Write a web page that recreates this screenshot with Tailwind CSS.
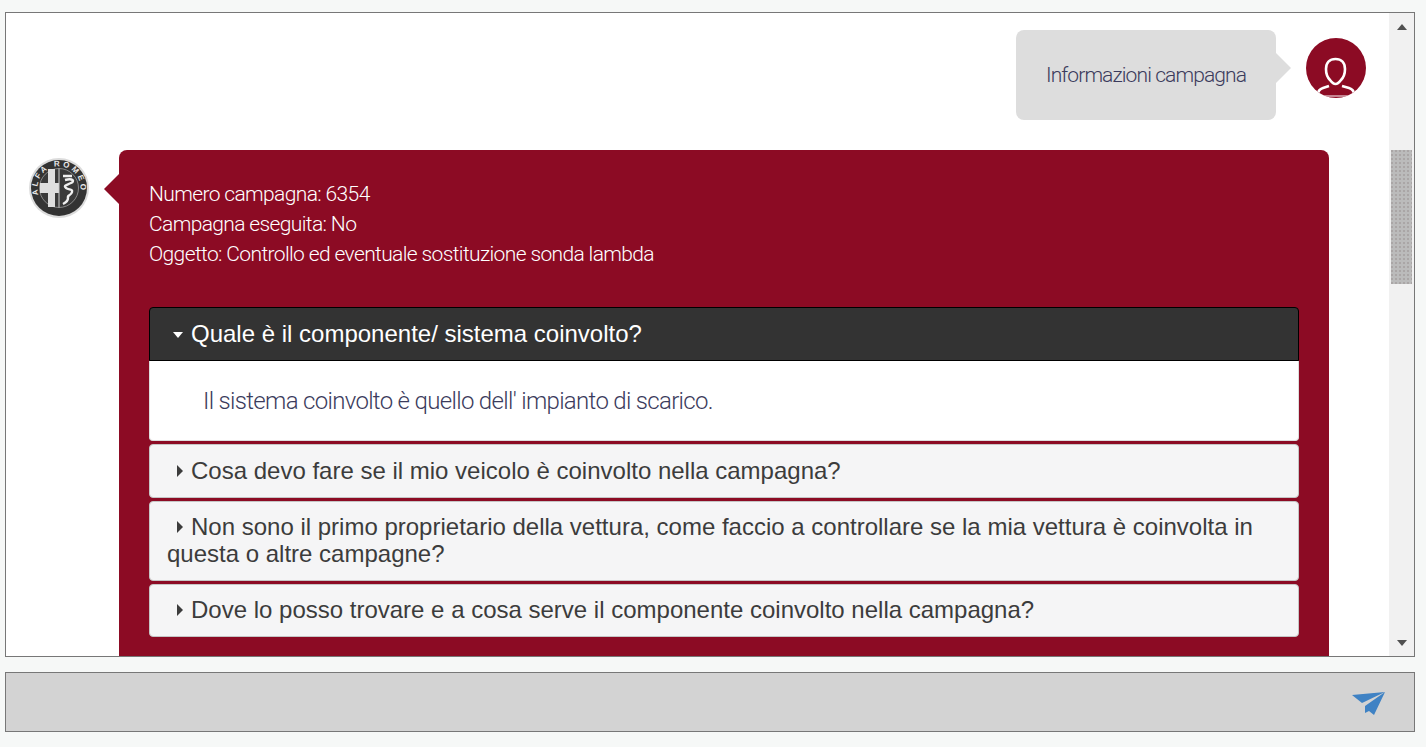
<!DOCTYPE html>
<html lang="it">
<head>
<meta charset="UTF-8" />
<title>Chat</title>
<script src="https://cdn.jsdelivr.net/npm/@tailwindcss/browser@4"></script>
</head>
<body class="bg-white h-[754px] overflow-hidden font-['Roboto',sans-serif]">
<div class="bg-[#f6f8f7] h-[747px] pt-3 px-[5px]">

  <!-- Finestra chat -->
  <div class="h-[645px] w-[1410px] border border-[#777] bg-white flex overflow-hidden">
    <div class="flex-1 min-w-0 overflow-hidden">

      <!-- Messaggio utente -->
      <div class="flex justify-end pt-[17px] pr-[23px]">
        <div class="relative w-[260px] h-[90px] bg-[#dddddd] rounded-lg flex items-center justify-center text-[21px] font-light text-[#3b3b5c] tracking-[-0.9px] pt-[1px]">
          Informazioni campagna
          <div class="absolute left-full top-[23px] border-y-[15px] border-y-transparent border-l-[15px] border-l-[#dddddd]"></div>
        </div>
        <div class="ml-[30px] mt-2 w-[60px] h-[60px] rounded-full bg-[#8c0b24] overflow-hidden">
          <svg width="60" height="60" viewBox="0 0 60 60" fill="none" stroke="#fff" stroke-width="2.600">
            <path d="M29.500 21c-6 0-9.500 4-9.500 10 0 4 1 8 4 11 1.500 2 3 4 5.500 4s4-2 5.500-4c3-3 4-7 4-11 0-6-3.500-10-9.500-10z" />
            <path d="M12 56c0-3 2-5 5-6l6-2M48 56c0-3-2-5-5-6l-7-2" />
            <path d="M14 58h32" stroke-width="1" />
          </svg>
        </div>
      </div>

      <!-- Risposta -->
      <div class="flex pl-[23px] pt-[30px]">
        <div class="w-[60px] h-[60px] mt-2 shrink-0">
          <svg width="60" height="60" viewBox="0 0 60 60">
            <circle cx="30" cy="30" r="30" fill="#dcdcdc" />
            <circle cx="30" cy="30" r="28" fill="#333" />
            <circle cx="30" cy="30" r="19.500" fill="#3a3a3a" stroke="#aaa" stroke-width="0.700" />
            <path d="M11 25h19v10H11z" fill="#dedede" />
            <path d="M19 11h7v38h-7z" fill="#dedede" />
            <path d="M30 10.500v39" stroke="#ccc" stroke-width="1" />
            <path d="M34 18h9M36 22c8-2 10 1 6 3-4 2-8 2-5 5 3 2 7 1 6 4-1 4-5 3-4 6 0 3-3 5-5 6" fill="none" stroke="#f0f0f0" stroke-width="2.400" />
            <path id="logoArc" d="M9.700 37A21.500 21.500 0 1 1 50.300 37" fill="none" />
            <text font-family="Liberation Sans, sans-serif" font-size="8" font-weight="700" fill="#e8e8e8" letter-spacing="2.600"><textPath href="#logoArc">ALFA ROMEO</textPath></text>
          </svg>
        </div>

        <div class="relative ml-[30px] w-[1210px] h-[600px] shrink-0 bg-[#8c0b24] rounded-t-lg pt-[29px] px-[30px]">
          <div class="absolute right-full top-[24px] border-y-[15px] border-y-transparent border-r-[15px] border-r-[#8c0b24]"></div>
          <div class="text-[21px] leading-[30px] font-light text-white tracking-[-0.63px]">
            <p>Numero campagna: 6354</p>
            <p>Campagna eseguita: No</p>
            <p>Oggetto: Controllo ed eventuale sostituzione sonda lambda</p>
          </div>

          <!-- Accordion -->
          <div class="mt-[38px] flex flex-col gap-[3px] font-['Liberation_Sans',sans-serif] text-[24px] leading-[27px]">
            <div>
              <div class="bg-[#333] text-white border border-black rounded-t px-[17px] pt-[12px] pb-[13px]">
                <span class="inline-block align-[4px] ml-[6px] mr-[8px] border-x-[5px] border-x-transparent border-t-[6px] border-t-white"></span>Quale è il componente/ sistema coinvolto?
              </div>
              <div class="bg-white border border-[#ddd] border-t-0 rounded-b h-[80px] pl-[53px] pt-[25px] font-['Roboto',sans-serif] font-light text-[24px] leading-[30px] text-[#3b3b5c] tracking-[-0.68px]">Il sistema coinvolto è quello dell' impianto di scarico.</div>
            </div>
            <div class="bg-[#f5f5f6] text-[#3c3c3c] border border-[#c5c5c5] rounded px-[17px] pt-[12px] pb-[13px]">
              <span class="inline-block align-[2px] ml-[10px] mr-[8px] border-y-[6px] border-y-transparent border-l-[6px] border-l-[#3c3c3c]"></span>Cosa devo fare se il mio veicolo è coinvolto nella campagna?
            </div>
            <div class="bg-[#f5f5f6] text-[#3c3c3c] border border-[#c5c5c5] rounded px-[17px] pt-[11px] pb-[13px]">
              <span class="inline-block align-[2px] ml-[10px] mr-[8px] border-y-[6px] border-y-transparent border-l-[6px] border-l-[#3c3c3c]"></span>Non sono il primo proprietario della vettura, come faccio a controllare se la mia vettura è coinvolta in questa o altre campagne?
            </div>
            <div class="bg-[#f5f5f6] text-[#3c3c3c] border border-[#c5c5c5] rounded px-[17px] pt-[11px] pb-[13px]">
              <span class="inline-block align-[2px] ml-[10px] mr-[8px] border-y-[6px] border-y-transparent border-l-[6px] border-l-[#3c3c3c]"></span>Dove lo posso trovare e a cosa serve il componente coinvolto nella campagna?
            </div>
          </div>
        </div>
      </div>
    </div>

    <!-- Barra di scorrimento -->
    <div class="w-[25px] shrink-0 bg-[#f1f1f1] flex flex-col items-center">
      <div class="h-[137px] pt-[11px]">
        <div class="border-x-[5.500px] border-x-transparent border-b-[6px] border-b-[#505050]"></div>
      </div>
      <div class="w-[21px] h-[134px] bg-[#bbbbbb] bg-[radial-gradient(circle_at_1px_1px,#aaa6a6_1px,transparent_1px)] bg-[length:4px_4px]"></div>
      <div class="flex-1"></div>
      <div class="pb-[10px]">
        <div class="border-x-[5.500px] border-x-transparent border-t-[6px] border-t-[#505050]"></div>
      </div>
    </div>
  </div>

  <!-- Input -->
  <div class="mt-[15px] h-[60px] w-[1410px] border border-[#777] bg-[#d3d3d3] flex items-center justify-end pr-[28px]">
    <svg class="mt-[2px]" width="36" height="26" viewBox="0 0 36 26" fill="#3f82c4">
      <path d="M2 5 35 2 12 13z" />
      <path d="M35 2 24 25 19 21 15 23 15 16z" />
    </svg>
  </div>
</div>
</body>
</html>
